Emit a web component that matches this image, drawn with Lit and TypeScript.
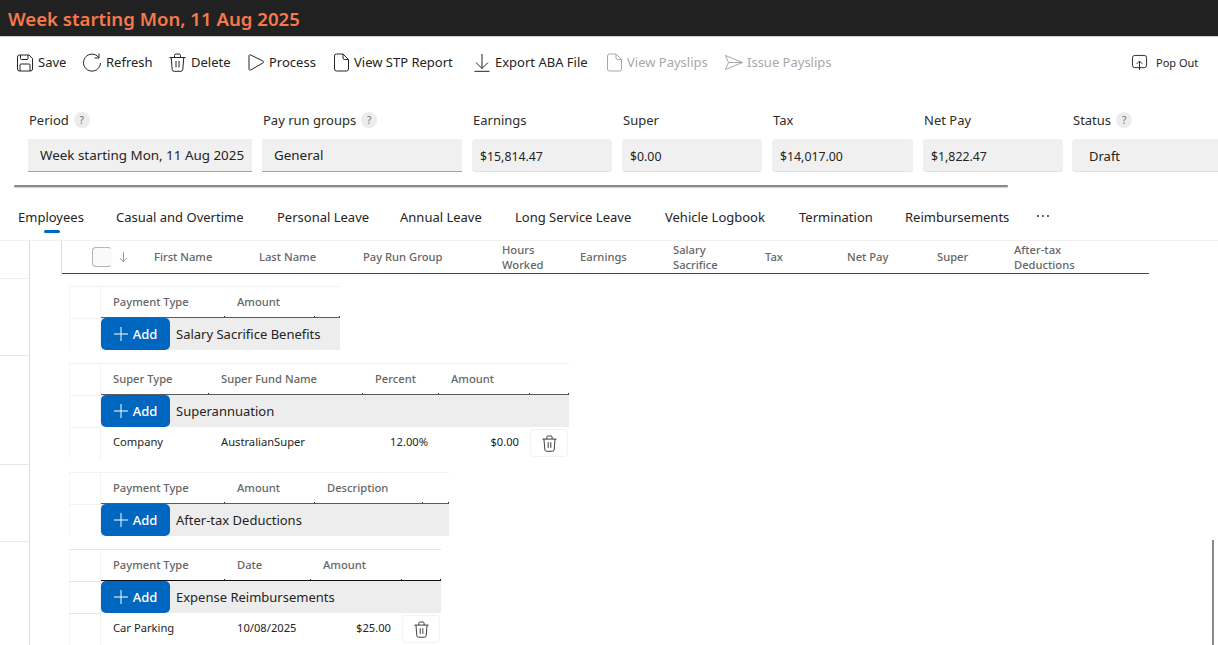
import { LitElement, html, css, svg } from "lit";
import { customElement } from "lit/decorators.js";

const I = {
  save: { w: 16, p: svg`<path d="M.5 4a2 2 0 0 1 2-2h9.500l3.500 3.500V16a2 2 0 0 1-2 2h-11a2 2 0 0 1-2-2z"/><path d="M3.500 2v3.500a1 1 0 0 0 1 1h5.500a1 1 0 0 0 1-1V2M3 18v-6a1 1 0 0 1 1-1h8a1 1 0 0 1 1 1v6"/>` },
  refresh: { w: 18, p: svg`<path d="M15.800 4.500A8.500 8.500 0 1 0 17.500 10"/><path d="M16 .5v4.500h-4.500"/>` },
  trash: { w: 17, p: svg`<path d="M.5 4.500h16M5.500 4.500v-2a1.500 1.500 0 0 1 1.500-1.500h3a1.500 1.500 0 0 1 1.500 1.500v2M2.200 4.500l1 12a2 2 0 0 0 2 1.800h6.600a2 2 0 0 0 2-1.800l1-12M7 8v6.500M10 8v6.500"/>` },
  play: { w: 16, p: svg`<path d="M1 2.800v13.400a1 1 0 0 0 1.500.9l12.500-7.200a1 1 0 0 0 0-1.800L2.500 1.900a1 1 0 0 0-1.500.9z"/>` },
  doc: { w: 15, p: svg`<path d="M.5 3a2 2 0 0 1 2-2h6.500l5.500 5.500V16a2 2 0 0 1-2 2h-10a2 2 0 0 1-2-2z"/><path d="M9 1v4a1.500 1.500 0 0 0 1.500 1.500h4"/>` },
  down: { w: 16, p: svg`<path d="M8 1v14.500M2 9.500l6 6 6-6M.5 18.300h15"/>` },
  send: { w: 17, p: svg`<path d="M.5 2.500 17.500 9.500.5 16.500 3.500 9.500z"/><path d="M3.500 9.500h14"/>` },
  pop: { w: 17, p: svg`<rect x=".5" y="2.500" width="15" height="13" rx="2.500"/><path d="M8 18V8.500M5 11.500l3-3 3 3"/>` },
};

type Ico = { w: number; p: unknown };
const icon = (i: Ico) => html`<svg class="ic w${i.w}" viewBox="0 0 ${i.w} 19">${i.p}</svg>`;

type Tbl = {
  w: number; title: string; dark?: boolean; cols: { t: string; w: number }[];
  rows?: { c: string[]; }[];
};

const tables: Tbl[] = [
  { w: 239, title: "Salary Sacrifice Benefits", cols: [{ t: "Payment Type", w: 124 }, { t: "Amount", w: 90 }, { t: "", w: 25 }] },
  { w: 468, title: "Superannuation", cols: [{ t: "Super Type", w: 108 }, { t: "Super Fund Name", w: 154 }, { t: "Percent", w: 76 }, { t: "Amount", w: 91 }, { t: "", w: 39 }],
    rows: [{ c: ["Company", "AustralianSuper", "12.00%", "$0.00"] }] },
  { w: 348, title: "After-tax Deductions", cols: [{ t: "Payment Type", w: 124 }, { t: "Amount", w: 90 }, { t: "Description", w: 108 }, { t: "", w: 26 }] },
  { w: 340, dark: true, title: "Expense Reimbursements", cols: [{ t: "Payment Type", w: 124 }, { t: "Date", w: 86 }, { t: "Amount", w: 91 }, { t: "", w: 39 }],
    rows: [{ c: ["Car Parking", "10/08/2025", "$25.00"] }] },
];

const fields = [
  { l: "Period", v: "Week starting Mon, 11 Aug 2025", h: true, k: "sq" },
  { l: "Pay run groups", v: "General", h: true, k: "sq" },
  { l: "Earnings", v: "$15,814.47", k: "rd" },
  { l: "Super", v: "$0.00", k: "rd" },
  { l: "Tax", v: "$14,017.00", k: "rd" },
  { l: "Net Pay", v: "$1,822.47", k: "rd" },
  { l: "Status", v: "Draft", h: true, k: "st" },
];

const heads = [["First Name"], ["Last Name"], ["Pay Run Group"], ["Hours", "Worked"], ["Earnings"], ["Salary", "Sacrifice"], ["Tax"], ["Net Pay"], ["Super"], ["After-tax", "Deductions"]];
const tabs = ["Employees", "Casual and Overtime", "Personal Leave", "Annual Leave", "Long Service Leave", "Vehicle Logbook", "Termination", "Reimbursements"];

@customElement("app-root")
export class AppRoot extends LitElement {
  static styles = css`
    :host { display: block; position: relative; height: 645px; overflow: hidden; background: #fff; color: #242424;
      font-family: "Noto Sans", "Open Sans", sans-serif; font-size: 13px; }
    .title { height: 36px; background: #212121; color: #f7784a; font-size: 18.6px; font-weight: 600; line-height: 37px; padding-left: 8px; border-bottom: 1px solid #d0d0d0; }
    .bar { display: grid; grid-template-columns: 66px 86px 79px 86px 140px 133px 118px 407px auto; padding: 14px 0 0 17px; height: 50px; box-sizing: border-box; align-items: start; }
    .btn { display: flex; align-items: center; gap: 5px; height: 22px; white-space: nowrap; }
    .btn.off { color: #a8a8a8; }
    .ic { height: 19px; fill: none; stroke: currentColor; stroke-width: 1; flex: none; overflow: visible; }
    .w15 { width: 15px; } .w16 { width: 16px; } .w17 { width: 17px; } .w18 { width: 18px; }
    .btn .ic { color: #242424; }
    .btn.off .ic { color: #a8a8a8; }
    .pop { font-size: 11px; gap: 8px; }
    .pop .ic { width: 16px; height: 18px; }
    .fields { display: grid; grid-template-columns: 224px 200px 140px 140px 141px 140px 150px; column-gap: 10px; padding: 21px 0 0 28px; }
    .f { min-width: 0; }
    .f:last-child { margin-left: -1px; }
    .lab { height: 24px; display: flex; align-items: center; gap: 5px; padding-left: 1px; margin-bottom: 7px; color: #2c2c2c; white-space: nowrap; }
    .q { width: 16px; height: 16px; border-radius: 50%; background: #ececec; color: #707070; font-size: 10px; text-align: center; line-height: 16px; }
    .val { height: 33px; box-sizing: border-box; background: #f0f0f0; line-height: 32px; white-space: nowrap; overflow: hidden; border-bottom: 1px solid #a6a6a6; }
    .val.sq { padding-left: 12px; font-size: 13.400px; }
    .val.rd { border-radius: 4px; border-bottom-color: #e2e2e2; padding-left: 8px; line-height: 36px; font-size: 12.300px; }
    .val.st { border-radius: 4px 0 0 4px; border-bottom-color: #e2e2e2; padding-left: 17px; line-height: 34px; }
    .tabs { display: grid; grid-template-columns: 98px 161px 123px 115px 150px 134px 106px 131px auto; padding: 0 0 0 18px; height: 48px; margin-top: 20px; align-items: start; box-sizing: border-box; }
    .tab { position: relative; height: 46px; padding-top: 16px; box-sizing: border-box; white-space: nowrap; line-height: 18px; }
    .tab.on::after { content: ""; position: absolute; left: 26px; width: 16px; height: 3px; top: 38px; background: #0067c0; border-radius: 2px; }
    .dots { display: flex; gap: 3px; padding: 23px 0 0 1px; }
    .dots i { width: 2px; height: 2px; background: #333; border-radius: 50%; }
    .ghead { display: flex; height: 33px; border-top: 1px solid #f0f0f0; box-sizing: border-box; width: 1218px; }
    .g0 { width: 30px; border-right: 1px solid #dcdcdc; box-sizing: border-box; flex: none; }
    .g1 { width: 32px; border-right: 1px solid #dcdcdc; box-sizing: border-box; flex: none; }
    .cols { display: grid; width: 1087px; height: 33px; box-sizing: border-box; border-bottom: 1px solid #444; grid-template-columns: 92px 105px 104px 139px 78px 93px 92px 82px 90px 77px 135px; color: #666; font-weight: 500; font-size: 11.200px; line-height: 15px; align-items: center; }
    .chk { display: flex; align-items: center; padding-left: 30px; gap: 7px; color: #9a9a9a; }
    .box { width: 20px; height: 20px; border: 1px solid #b4b4b4; border-radius: 4px; box-sizing: border-box; flex: none; border-right-color: transparent; background: #fafafa; }
    .arrow { width: 9px; height: 10px; stroke: #9a9a9a; fill: none; flex: none; }
    .sec { display: flex; box-sizing: border-box; }
    .sec .g0 { border-bottom: 1px solid #e8e8e8; }
    .spacer { height: 6px; display: flex; }
    .spacer .g0 { border-bottom: 1px solid #eeeeee; }
    .wrap { padding: 7px 0 6px 39px; }
    .t { display: grid; grid-template-columns: 32px auto; }
    .sel { border-top: 1px solid #f2f2f2; border-right: 1px solid #f2f2f2; box-sizing: border-box; border-left: 1px solid #f6f6f6; }
    .dark .sel { border-top-color: #e4e4e4; }
    .thead { display: grid; height: 32px; border-top: 1px solid #f2f2f2; border-bottom: 1px solid #5a5a5a; box-sizing: border-box; color: #666; font-weight: 500; font-size: 11.200px; line-height: 30px; }
    .dark .thead { border-top-color: #e4e4e4; border-bottom-color: #111; }
    .thead span { padding-left: 12px; white-space: nowrap; background: linear-gradient(#333, #333) right bottom / 1px 1px no-repeat; }
    .addrow { display: flex; height: 32px; background: #ededed; align-items: center; }
    .add { width: 69px; height: 32px; flex: none; background: #0067c0; color: #fff; border-radius: 5px; display: flex; align-items: center; justify-content: center; gap: 5px; font-weight: 500; }
    .add svg { width: 14px; height: 14px; stroke: #fff; fill: none; stroke-width: 1; }
    .addt { padding-left: 6px; white-space: nowrap; }
    .row { display: grid; height: 32px; font-size: 11.200px; align-items: center; }
    .row span { padding-left: 12px; white-space: nowrap; margin-top: -3px; }
    .row span.end { padding: 0 11px 0 0; text-align: right; }
    .trash { width: 38px; height: 28px; border: 1px solid #f2f2f2; border-radius: 4px; box-sizing: border-box; display: flex; align-items: center; justify-content: center; }
    .trash .ic { width: 15px; height: 17px; }
    .hline { position: absolute; left: 14px; top: 185px; width: 994px; height: 2px; background: #8a8a8a; border-radius: 1px; box-shadow: 0 1px 1px #d0d0d0; }
    .vline { position: absolute; left: 1212px; top: 540px; width: 2px; height: 105px; background: #8a8a8a; }
  `;

  private tbl(t: Tbl) {
    const tmpl = t.cols.map((c) => c.w + "px").join(" ");
    return html`<div class="t ${t.dark ? "dark" : ""}">
      <div class="sel"></div>
      <div class="thead" style="grid-template-columns:${tmpl};width:${t.w}px">
        ${t.cols.map((c) => html`<span>${c.t}</span>`)}
      </div>
      <div class="sel"></div>
      <div class="addrow" style="width:${t.w}px">
        <div class="add"><svg viewBox="0 0 14 14"><path d="M7 0v14M0 7h14"/></svg>Add</div>
        <div class="addt">${t.title}</div>
      </div>
      ${(t.rows ?? []).map((r) => html`<div class="sel"></div>
        <div class="row" style="grid-template-columns:${tmpl};width:${t.w}px">
          ${r.c.map((v) => html`<span class=${/[$%]/.test(v) ? "end" : ""}>${v}</span>`)}
          <div class="trash">${icon(I.trash)}</div>
        </div>`)}
    </div>`;
  }

  render() {
    const b = (i: Ico, t: string, off = false) => html`<div class="btn ${off ? "off" : ""}">${icon(i)}${t}</div>`;
    return html`
      <div class="title">Week starting Mon, 11 Aug 2025</div>
      <div class="bar">
        ${b(I.save, "Save")}${b(I.refresh, "Refresh")}${b(I.trash, "Delete")}${b(I.play, "Process")}
        ${b(I.doc, "View STP Report")}${b(I.down, "Export ABA File")}${b(I.doc, "View Payslips", true)}${b(I.send, "Issue Payslips", true)}
        <div class="btn pop">${icon(I.pop)}Pop Out</div>
      </div>
      <div class="fields">
        ${fields.map((f) => html`<div class="f">
          <div class="lab">${f.l}${f.h ? html`<span class="q">?</span>` : ""}</div>
          <div class="val ${f.k}">${f.v}</div>
        </div>`)}
      </div>
      <div class="tabs">
        ${tabs.map((t, i) => html`<div class="tab ${i === 0 ? "on" : ""}">${t}</div>`)}
        <div class="dots"><i></i><i></i><i></i></div>
      </div>
      <div class="ghead">
        <div class="g0"></div><div class="g1"></div>
        <div class="cols">
          <div class="chk"><span class="box"></span><svg class="arrow" viewBox="0 0 9 10"><path d="M4.500 0v9.500M.8 6l3.700 3.700L8.200 6"/></svg></div>
          ${heads.map((h) => html`<div>${h[0]}${h[1] ? html`<br />${h[1]}` : ""}</div>`)}
          <div></div>
        </div>
      </div>
      <div class="spacer"><div class="g0"></div></div>
      ${tables.map((t) => html`<div class="sec"><div class="g0"></div><div class="wrap">${this.tbl(t)}</div></div>`)}
      <div class="hline"></div>
      <div class="vline"></div>
    `;
  }
}
